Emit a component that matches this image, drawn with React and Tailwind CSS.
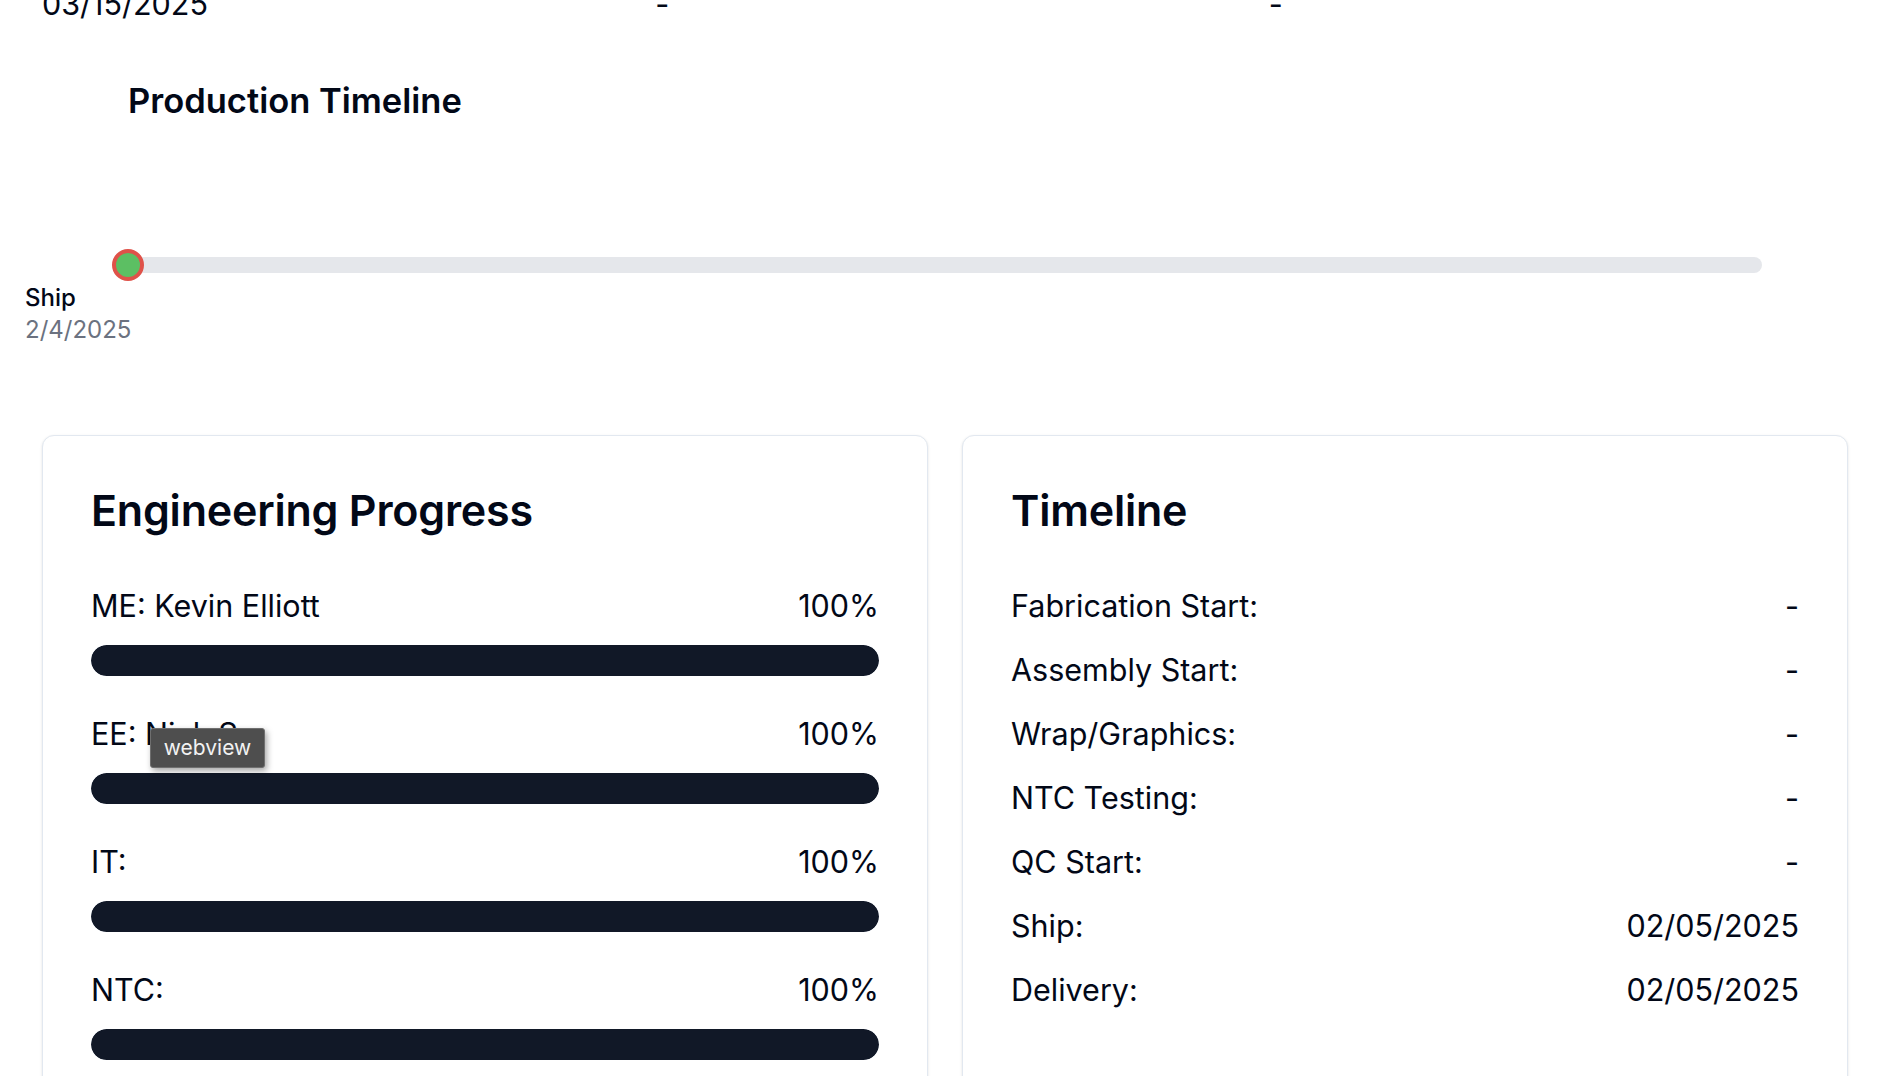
import React from "react";

const eng = [
  { label: "ME: Kevin Elliott", pct: 100 },
  { label: "EE: Nick S.", pct: 100, tooltip: true },
  { label: "IT:", pct: 100 },
  { label: "NTC:", pct: 100 },
  { label: "Software:", pct: 100 },
];

const timeline = [
  ["Fabrication Start:", "-"],
  ["Assembly Start:", "-"],
  ["Wrap/Graphics:", "-"],
  ["NTC Testing:", "-"],
  ["QC Start:", "-"],
  ["Ship:", "02/05/2025"],
  ["Delivery:", "02/05/2025"],
];

export default function App() {
  return (
    <div className="h-[1076px] overflow-hidden bg-white text-[#020817] font-['Inter','Noto_Sans',sans-serif]">
      <div className="px-[42px]">
        <div className="-mt-[18px] grid grid-cols-3 gap-[34px] text-[30.5px] leading-[43px]">
          <div>03/15/2025</div>
          <div>-</div>
          <div>-</div>
        </div>

        <section className="px-[86px] pt-[54px]">
          <h2 className="text-[34.5px] font-semibold leading-[44px]">Production Timeline</h2>
          <div className="relative mt-[134px] h-4 rounded-full bg-[#e5e7eb]">
            <div className="absolute left-0 top-1/2 h-[32px] w-[32px] -translate-x-1/2 -translate-y-1/2 rounded-full border-4 border-[#df5249] bg-[#5cbf63]" />
            <div className="absolute left-[-103px] top-[25px] text-[24px] leading-[32px]">
              <div className="font-medium">Ship</div>
              <div className="text-[#6b7280]">2/4/2025</div>
            </div>
          </div>
        </section>

        <div className="mt-[162px] grid grid-cols-2 gap-[34px]">
          <div className="h-[800px] rounded-[12px] border border-[#e2e8f0] bg-white p-[48px] shadow-sm">
            <h3 className="mb-[48px] text-[43px] font-semibold leading-[52px] tracking-[-0.005em]">Engineering Progress</h3>
            <div className="flex flex-col gap-[36px]">
              {eng.map((e) => (
                <div key={e.label} className="relative">
                  <div className="flex justify-between text-[30.5px] leading-[43px]">
                    <span>{e.label}</span>
                    <span>{e.pct}%</span>
                  </div>
                  <div className="mt-[18px] h-[31px] w-full overflow-hidden rounded-full bg-[#e2e8f0]">
                    <div className="h-full rounded-full bg-[#111827]" style={{ width: `${e.pct}%` }} />
                  </div>
                  {e.tooltip && (
                    <div className="absolute left-[59px] top-[16px] flex h-[40px] w-[115px] items-center justify-center rounded-[3px] border border-[#6f6f6f] bg-[#4e4e4e] text-[21px] text-[#f2f2f2] shadow-[2px_3px_6px_rgba(0,0,0,0.35)]">
                      webview
                    </div>
                  )}
                </div>
              ))}
            </div>
          </div>

          <div className="h-[800px] rounded-[12px] border border-[#e2e8f0] bg-white p-[48px] shadow-sm">
            <h3 className="mb-[48px] text-[43px] font-semibold leading-[52px] tracking-[-0.005em]">Timeline</h3>
            <div className="flex flex-col gap-[21px]">
              {timeline.map(([k, v]) => (
                <div key={k} className="flex justify-between text-[30.5px] leading-[43px]">
                  <span>{k}</span>
                  <span>{v}</span>
                </div>
              ))}
            </div>
          </div>
        </div>
      </div>
    </div>
  );
}
